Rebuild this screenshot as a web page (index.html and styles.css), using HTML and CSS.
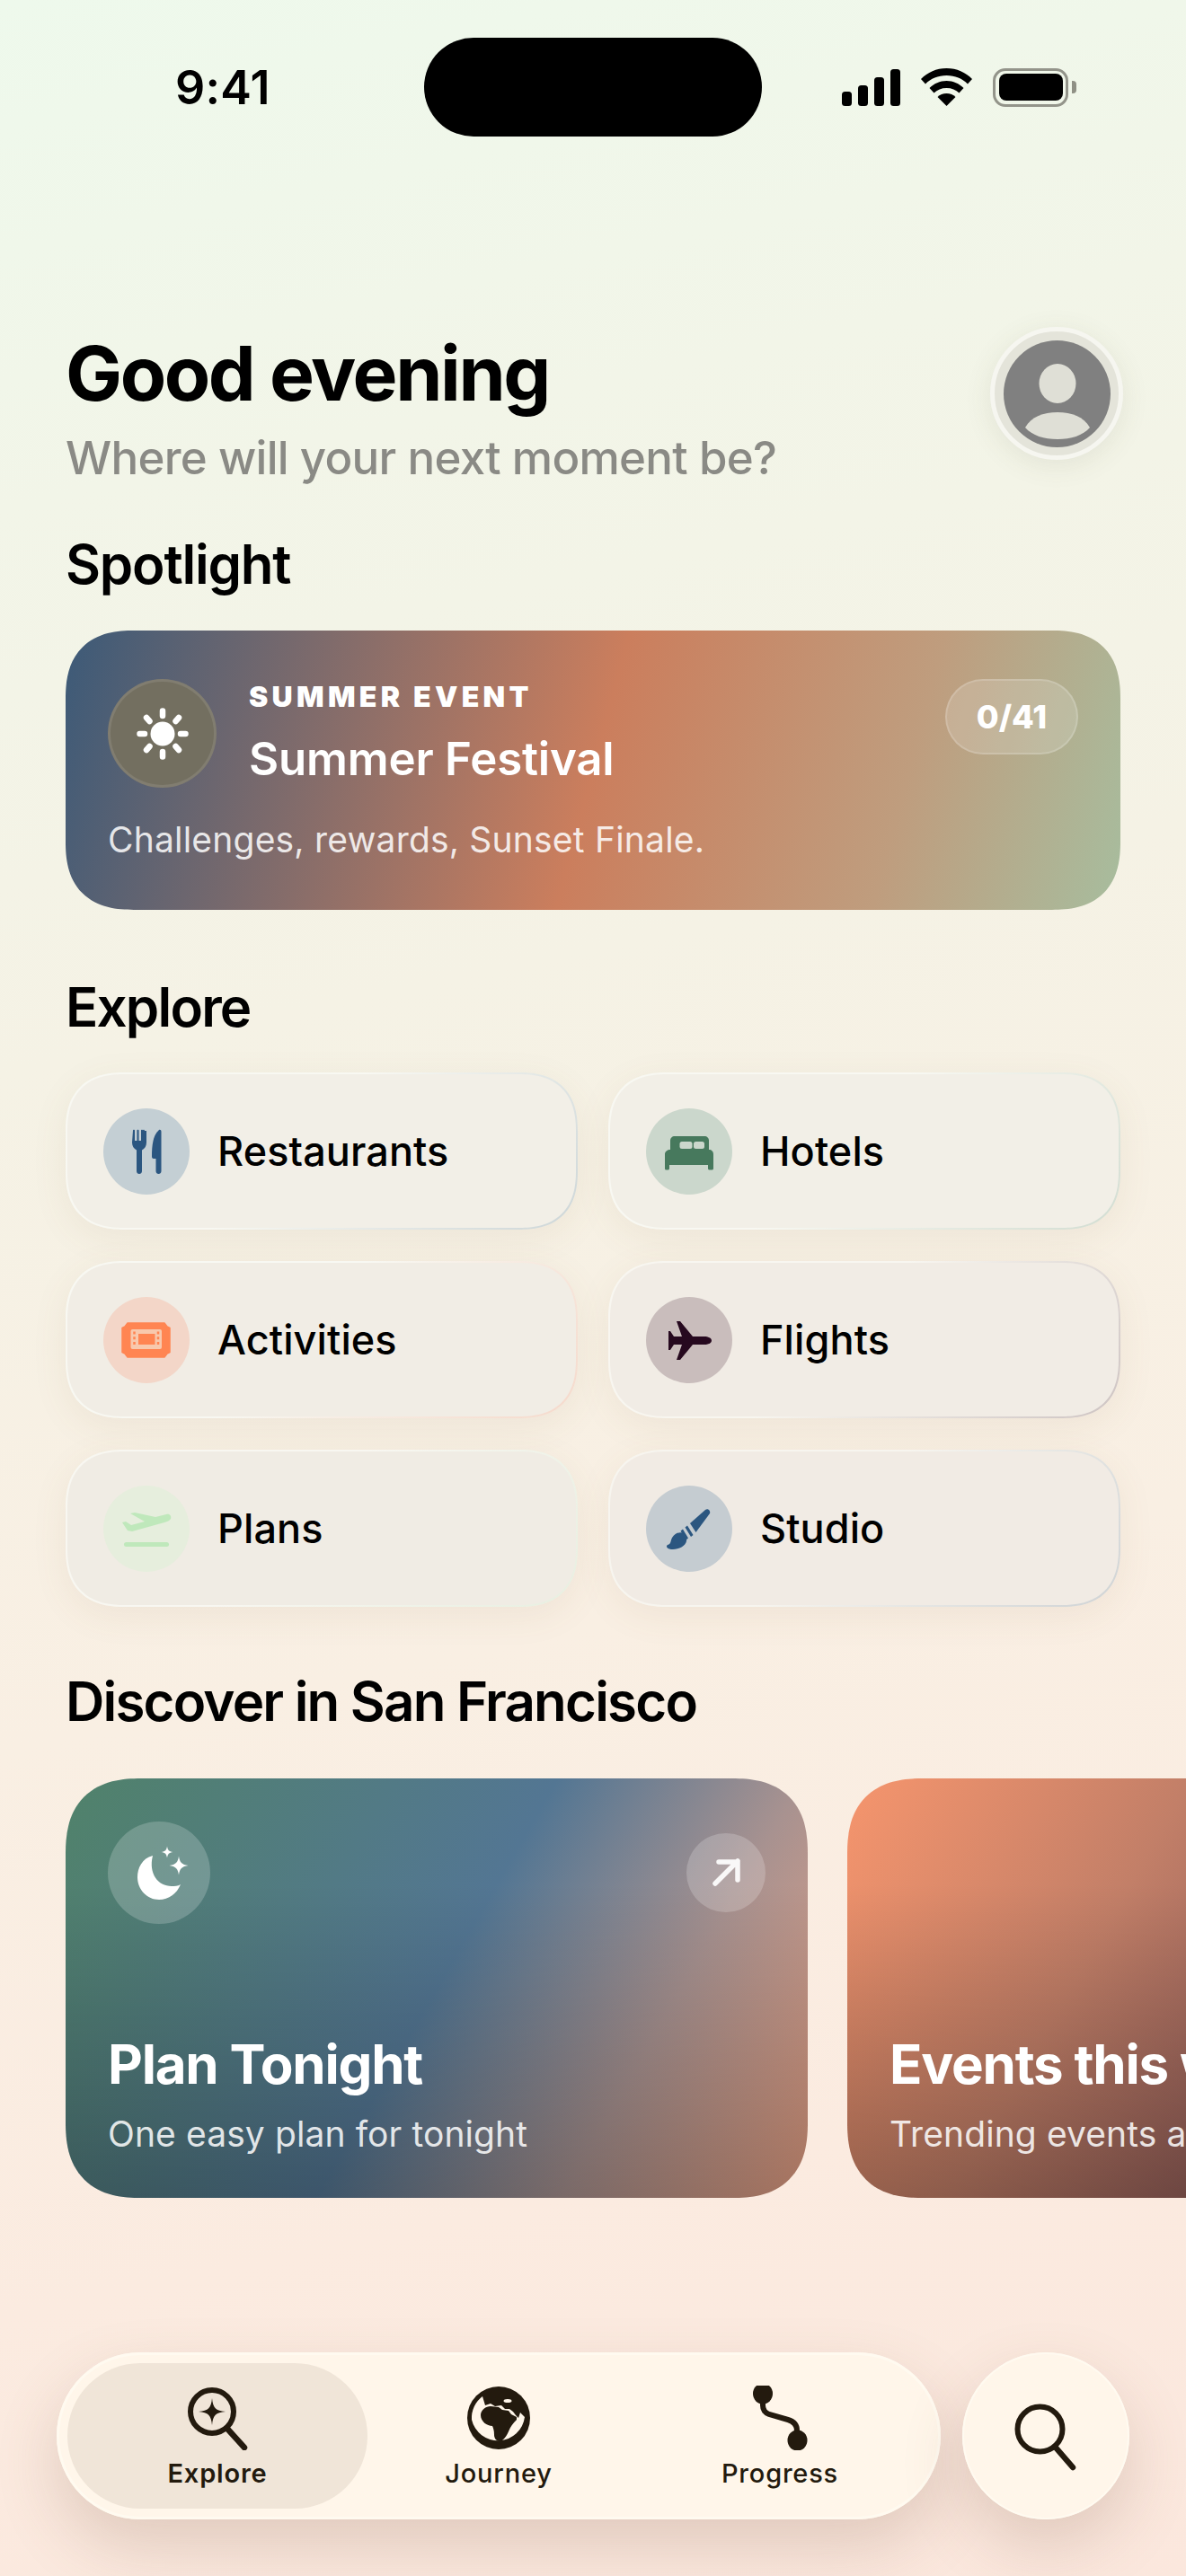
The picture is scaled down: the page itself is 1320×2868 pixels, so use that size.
FILE: index.html
```html
<!DOCTYPE html>
<html>
<head>
    <meta charset="utf-8" />
    <title>Explore</title>
    <link rel="stylesheet" href="styles.css">
</head>
<body>
    <div class="page">
        <div class="status-bar">
            <div class="status-time">9:41</div>
            <div class="island"></div>
            <div class="status-icons">
                <svg width="65" height="41" viewBox="0 0 65 41"><rect x="0" y="25" width="11" height="16" rx="3.5"/><rect x="18" y="18" width="11" height="23" rx="3.5"/><rect x="36" y="9" width="11" height="32" rx="3.5"/><rect x="54" y="0" width="11" height="41" rx="3.5"/></svg>
                <svg class="wifi" width="57" height="42" viewBox="0 0 57 42"><path d="M28.5 0C17 0 7.500 4.500 0 12l5 5.500C11 11.500 19 8 28.500 8S46 11.500 52 17.500l5-5.500C49.500 4.500 40 0 28.500 0z"/><path d="M28.500 14c-7.500 0-14 3-19 8l5 5.500c3.500-3.500 8.500-5.500 14-5.500s10.500 2 14 5.500l5-5.500c-5-5-11.500-8-19-8z"/><path d="M28.500 28c-4 0-7.500 1.500-10 4l10 10 10-10c-2.500-2.500-6-4-10-4z"/></svg>
                <div class="battery">
                    <div class="battery-body"><div class="battery-level"></div></div>
                    <div class="battery-nub"></div>
                </div>
            </div>
        </div>

        <header class="header">
            <div class="greeting">
                <h1>Good evening</h1>
                <p>Where will your next moment be?</p>
            </div>
            <div class="avatar">
                <svg width="119" height="119" viewBox="0 0 119 119"><circle cx="59.500" cy="59.500" r="59.500" fill="#808080"/><ellipse cx="60" cy="48" rx="20.500" ry="22" fill="#dfdfd6"/><path d="M24 97C31 85 44 80 60 80s29 5 36 17c-8 9-21 13-36 13s-28-4-36-13z" fill="#dfdfd6"/></svg>
            </div>
        </header>

        <h2 class="section-title spotlight-title">Spotlight</h2>
        <section class="spotlight">
            <div class="spotlight-row">
                <div class="spotlight-icon">
                    <svg width="70" height="70" viewBox="0 0 70 70" fill="#fff" stroke="#fff" stroke-width="6.500" stroke-linecap="round"><circle cx="35" cy="35" r="13.500" stroke="none"/><path d="M35 9.500v5.500M35 55v5.500M9.500 35h5.500M55 35h5.500M17 17l3.500 4M53 17l-3.500 4M17 53l3.500-4M53 53l-3.500-4"/></svg>
                </div>
                <div class="spotlight-text">
                    <div class="eyebrow">SUMMER EVENT</div>
                    <div class="spotlight-name">Summer Festival</div>
                </div>
                <div class="badge">0/41</div>
            </div>
            <p class="spotlight-desc">Challenges, rewards, Sunset Finale.</p>
        </section>

        <h2 class="section-title explore-title">Explore</h2>
        <div class="tiles">
            <div class="tile tile-blue">
                <div class="tile-icon icon-blue">
                    <svg width="96" height="96" viewBox="0 0 96 96" fill="#2b5680"><path d="M33 24.500c0-1 2-1 2 0V36h2.500V24.500c0-1 2-1 2 0V36H42V24.500c0-1 2-1 2 0V24.500c0-1 2-1 2 .5 0 0 2 0 2 0V38c0 4-2 7-5 8.500V70c0 4-6 4-6 0V46.500c-3-1.500-5-4.500-5-8.500z"/><path d="M62 24c1.500-.5 2.500.5 2.500 2v44c0 4-6 4-6 0V56h-2.500c-1.500 0-2-1-2-2.500C54 42 55 30 62 24z"/></svg>
                </div>
                <span>Restaurants</span>
            </div>
            <div class="tile tile-green">
                <div class="tile-icon icon-green">
                    <svg width="96" height="96" viewBox="0 0 96 96" fill="#47795d"><path d="M32 31h33c3 0 5 2 5 5v10H27V36c0-3 2-5 5-5z"/><rect x="37.500" y="37" width="14" height="8" rx="2.500" fill="#cbd7cc"/><rect x="53" y="37" width="12" height="8" rx="2.500" fill="#cbd7cc"/><path d="M27 46h43c3 0 5 2 5 5v16c0 1-1 1.500-2 1.500h-2c-1 0-2-.5-2-1.500v-4H26v4c0 1-1 1.500-2 1.500h-1c-1.500 0-2-.5-2-1.500V51c0-3 3-5 6-5z"/></svg>
                </div>
                <span>Hotels</span>
            </div>
            <div class="tile tile-orange">
                <div class="tile-icon icon-orange">
                    <svg width="96" height="96" viewBox="0 0 96 96" fill="#ff8552"><path d="M27 29h41l3 4 3 1.500v27L71 63l-3 4H27l-3-4-3-1.500v-27L24 33z" stroke="#ff8552" stroke-width="1.500" stroke-linejoin="round"/><rect x="30.500" y="36" width="34.500" height="22" rx="2" fill="#f8c9ad"/><rect x="39" y="41" width="18.500" height="12" fill="#ff8552"/><path d="M34.500 38.500v17M61 38.500v17" stroke="#ff8552" stroke-width="2.500" stroke-dasharray="3 2.800"/></svg>
                </div>
                <span>Activities</span>
            </div>
            <div class="tile tile-plum">
                <div class="tile-icon icon-plum">
                    <svg width="96" height="96" viewBox="0 0 96 96" fill="#26091f"><path d="M73 48.500c0-3-4-4.500-8-4.500H52L38 27h-4l6 17h-9l-4-6h-2v21h2l4-6h9l-6 17h4l14-17h13c4 0 8-1.500 8-4.500z"/></svg>
                </div>
                <span>Flights</span>
            </div>
            <div class="tile tile-mint">
                <div class="tile-icon icon-mint">
                    <svg width="96" height="96" viewBox="0 0 96 96" fill="#bfe8bb"><path d="M21 41l4-1 6 4 15-4-16-9 5-1 23 5 12-3c4-1 6 2 5 5-1 2-4 3-7 4L32 51l-5-1z"/><rect x="23" y="63" width="50" height="5" rx="2.500"/></svg>
                </div>
                <span>Plans</span>
            </div>
            <div class="tile tile-slate">
                <div class="tile-icon icon-slate">
                    <svg width="96" height="96" viewBox="0 0 96 96" fill="#2b5680"><path d="M66 27c3-2 6 1 5 4L55.500 52 49 42z"/><path d="M46 44.500l6.500 10.500-2.500 2-6.500-10.500zM41 48.500l6 10-2 1.500-6.500-9.500z"/><path d="M37 52.500c5-1 9 3 8 9-1 7-12 11-19 9-3-1-4-3-2-4.500 4-1 3-4 5-8 2-3.500 5-5.500 8-5.500z"/></svg>
                </div>
                <span>Studio</span>
            </div>
        </div>

        <h2 class="section-title discover-title">Discover in San Francisco</h2>
        <div class="discover-row">
            <div class="discover-card card-tonight">
                <div class="card-top">
                    <div class="moon-icon">
                        <svg width="114" height="114" viewBox="0 0 114 114" fill="#fff"><path d="M50 38C38 41 33 52 33 62c0 14 11 25 24 25 11 0 20-7 24-17-3 2-7 2-10 2-15 0-26-14-21-34z"/><path d="M79 38.500c1 7 3.500 9.500 10.500 10.500-7 1-9.500 3.500-10.500 10.500-1-7-3.500-9.500-10.500-10.500 7-1 9.500-3.500 10.500-10.500z"/><path d="M66 27.500c.7 4.500 2 5.800 6.500 6.500-4.500.7-5.800 2-6.500 6.500-.7-4.500-2-5.800-6.500-6.500 4.500-.7 5.800-2 6.500-6.500z"/></svg>
                    </div>
                    <div class="arrow-icon">
                        <svg width="88" height="88" viewBox="0 0 88 88" fill="none" stroke="#fff" stroke-opacity=".92" stroke-width="5.500" stroke-linecap="round" stroke-linejoin="round"><path d="M32 56l25-25M36 32h21v20"/></svg>
                    </div>
                </div>
                <div class="card-title">Plan Tonight</div>
                <div class="card-sub">One easy plan for tonight</div>
            </div>
            <div class="discover-card card-events">
                <div class="card-top"></div>
                <div class="card-title">Events this week</div>
                <div class="card-sub">Trending events around you</div>
            </div>
        </div>

        <div class="bottom-bar">
            <nav class="tabs">
                <div class="tab tab-active">
                    <svg width="72" height="72" viewBox="0 0 72 72" fill="none" stroke="#231a0e" stroke-width="6" stroke-linecap="round"><circle cx="30" cy="29" r="24"/><path d="M47 48l19 21" stroke-width="6.500"/><path d="M30 14c1 11 4 14 15 15-11 1-14 4-15 15-1-11-4-14-15-15 11-1 14-4 15-15z" fill="#231a0e" stroke="none"/></svg>
                    <span>Explore</span>
                </div>
                <div class="tab">
                    <svg width="72" height="72" viewBox="-36 -36 72 72"><circle r="35" fill="#231a0e"/><path d="M-30 2A30 30 0 0 1-18-24L-15-14-9-16-4-13 3-14 7-10 12-10 16-7 19-3 22 0 24-6 29-1A30 30 0 0 1-30 2Z" fill="#fff6ea"/><path d="M-20-3C-20-9-14-13-9-13L0-12 4-9 11-8 14-4 20-1 20 2C16 6 13 10 11.500 14 9 20 5 26 1 26-3 26-5 22-5 19-5 14-6 11-7 9-13 9-20 4-20-3Z" fill="#231a0e"/><ellipse cx="10" cy="-19" rx="4.500" ry="2" fill="#fff6ea"/></svg>
                    <span>Journey</span>
                </div>
                <div class="tab">
                    <svg width="72" height="72" viewBox="0 0 72 72" fill="#231a0e"><ellipse cx="17" cy="9" rx="11" ry="11.500"/><ellipse cx="55.500" cy="61" rx="11" ry="11.500"/><path d="M17 15v7c0 5 2 8 7 10l21 6c7 2 10 6 10 12v5" fill="none" stroke="#231a0e" stroke-width="6"/></svg>
                    <span>Progress</span>
                </div>
            </nav>
            <div class="search-button">
                <svg width="80" height="84" viewBox="0 0 80 84" fill="none" stroke="#231a0e" stroke-width="6" stroke-linecap="round"><circle cx="28.500" cy="28.500" r="25"/><path d="M46 49l19 22" stroke-width="6.500"/></svg>
            </div>
        </div>
    </div>
</body>
</html>
```

FILE: styles.css
```css
html, body {
    margin: 0;
    font-family: Inter, "Liberation Sans", sans-serif;
    color: #000;
}

h1, h2, p {
    margin: 0;
}

.page {
    width: 1320px;
    height: 2868px;
    overflow: hidden;
    display: flex;
    flex-direction: column;
    box-sizing: border-box;
    padding: 42px 73px 63px;
    background: linear-gradient(168deg, #eef9ec 0%, #f2f5e8 18%, #f5f2e5 38%, #f9efe3 62%, #fbebe0 82%, #fbe7dd 100%);
}

/* status bar */
.status-bar {
    display: flex;
    align-items: center;
    height: 110px;
}

.status-time {
    width: 399px;
    padding-left: 122px;
    box-sizing: border-box;
    font-size: 52px;
    font-weight: 600;
    letter-spacing: .2px;
}

.island {
    width: 376px;
    height: 110px;
    border-radius: 55px;
    background: #000;
}

.status-icons {
    display: flex;
    align-items: center;
    margin-left: 89px;
}

.status-icons svg {
    display: block;
}

.wifi {
    margin-left: 23px;
}

.battery {
    display: flex;
    align-items: center;
    margin-left: 23px;
}

.battery-body {
    width: 84px;
    height: 43px;
    box-sizing: border-box;
    border: 3.5px solid #93948a;
    border-radius: 14px;
    padding: 3.5px;
}

.battery-level {
    height: 100%;
    background: #000;
    border-radius: 8px;
}

.battery-nub {
    width: 5px;
    height: 14px;
    margin-left: 4px;
    background: #8f9085;
    border-radius: 0 4px 4px 0;
}

/* header */
.header {
    display: flex;
    justify-content: space-between;
    margin-top: 212px;
}

.greeting {
    padding-top: 2px;
}

.greeting h1 {
    font-size: 84px;
    line-height: 100px;
    font-weight: 700;
    letter-spacing: -2.4px;
}

.greeting p {
    margin-top: 14px;
    font-size: 51px;
    line-height: 60px;
    font-weight: 500;
    color: #8a8a85;
    letter-spacing: -.7px;
}

.avatar {
    width: 148px;
    height: 148px;
    margin-right: -3px;
    box-sizing: border-box;
    border: 5px solid #f6f6f0;
    border-radius: 50%;
    background: #e4e4da;
    display: flex;
    align-items: center;
    justify-content: center;
    box-shadow: 0 6px 30px rgba(90, 90, 60, .1);
}

.avatar svg {
    display: block;
}

.section-title {
    font-size: 60px;
    line-height: 72px;
    font-weight: 600;
    letter-spacing: -1.8px;
}

.spotlight-title {
    margin-top: 52px;
    letter-spacing: -1.2px;
}

.explore-title {
    margin-top: 72px;
}

.discover-title {
    margin-top: 69px;
}

/* spotlight card */
.spotlight {
    margin-top: 38px;
    height: 311px;
    box-sizing: border-box;
    padding: 54px 47px 0;
    border-radius: 76px;
    corner-shape: superellipse(1.3);
    color: #fff;
    background: linear-gradient(105deg, #3c5a78 0%, #cb7e5d 50%, #bf9d7e 78%, #a7bd9e 100%);
}

.spotlight-row {
    display: flex;
    align-items: flex-start;
}

.spotlight-icon {
    width: 121px;
    height: 121px;
    flex: none;
    box-sizing: border-box;
    border: 3px solid rgba(255, 255, 255, .1);
    border-radius: 50%;
    background: #736f60;
    display: flex;
    align-items: center;
    justify-content: center;
}

.spotlight-text {
    margin-left: 36px;
}

.eyebrow {
    font-size: 32px;
    line-height: 40px;
    font-weight: 900;
    letter-spacing: 4.300px;
}

.spotlight-name {
    margin-top: 19px;
    font-size: 51px;
    line-height: 60px;
    font-weight: 600;
    letter-spacing: -.2px;
}

.badge {
    margin-left: auto;
    width: 148px;
    height: 84px;
    box-sizing: border-box;
    border: 2px solid rgba(255, 255, 255, .16);
    border-radius: 42px;
    background: rgba(255, 255, 255, .16);
    display: flex;
    align-items: center;
    justify-content: center;
    font-size: 36px;
    font-weight: 800;
}

.spotlight-desc {
    margin-top: 34px;
    font-size: 39px;
    line-height: 48px;
    color: rgba(255, 255, 255, .85);
    letter-spacing: .2px;
}

/* explore tiles */
.tiles {
    margin-top: 37px;
    display: grid;
    grid-template-columns: 570px 570px;
    grid-auto-rows: 175px;
    gap: 35px 34px;
}

.tile {
    display: flex;
    align-items: center;
    gap: 31px;
    box-sizing: border-box;
    padding-left: 40px;
    border: 2px solid transparent;
    border-radius: 66px;
    corner-shape: superellipse(1.3);
    font-size: 45px;
    font-weight: 500;
    letter-spacing: .1px;
    box-shadow: 0 10px 40px rgba(130, 100, 70, .08);
}

.tile-blue {
    background: linear-gradient(#f2efe7, #f2efe7) padding-box, linear-gradient(135deg, #f8f8f2 45%, #cdd6d8) border-box;
}

.tile-green {
    background: linear-gradient(#f2efe7, #f2efe7) padding-box, linear-gradient(135deg, #f8f8f2 45%, #d2ddd2) border-box;
}

.tile-orange {
    background: linear-gradient(#f1ede5, #f1ede5) padding-box, linear-gradient(135deg, #f8f8f2 45%, #f5d9cb) border-box;
}

.tile-plum {
    background: linear-gradient(#f1ece5, #f1ece5) padding-box, linear-gradient(135deg, #f8f6f0 45%, #cdc3c2) border-box;
}

.tile-mint {
    background: linear-gradient(#f0ece4, #f0ece4) padding-box, linear-gradient(135deg, #f8f7f1 45%, #e8efe1) border-box;
}

.tile-slate {
    background: linear-gradient(#f1ebe4, #f1ebe4) padding-box, linear-gradient(135deg, #f7f5ef 45%, #cfd3d5) border-box;
}

.tile-icon {
    width: 96px;
    height: 96px;
    flex: none;
    border-radius: 50%;
}

.tile-icon svg {
    display: block;
}

.icon-blue {
    background: #c4cfd4;
}

.icon-green {
    background: #cbd7cc;
}

.icon-orange {
    background: #f3d6c8;
}

.icon-plum {
    background: #c9bdbc;
}

.icon-mint {
    background: #e6eedd;
}

.icon-slate {
    background: #c5ccd1;
}

/* discover cards */
.discover-row {
    margin-top: 50px;
    display: flex;
    gap: 44px;
}

.discover-card {
    width: 826px;
    height: 467px;
    flex: none;
    box-sizing: border-box;
    padding: 48px 47px 47px;
    border-radius: 84px;
    corner-shape: superellipse(1.3);
    color: #fff;
    display: flex;
    flex-direction: column;
}

.card-tonight {
    background: linear-gradient(to bottom, rgba(0, 0, 0, 0) 25%, rgba(0, 0, 0, .28) 100%), linear-gradient(120deg, #50826a 0%, #537693 50%, #a89290 75%, #e8a083 100%);
}

.card-events {
    background: linear-gradient(to bottom, rgba(0, 0, 0, 0) 25%, rgba(0, 0, 0, .28) 100%), linear-gradient(120deg, #f6956d 0%, #c27f68 35%, #95605a 60%, #6e4a48 100%);
}

.card-top {
    flex: 1;
    display: flex;
    align-items: flex-start;
    justify-content: space-between;
}

.moon-icon {
    width: 114px;
    height: 114px;
    border-radius: 50%;
    background: rgba(255, 255, 255, .2);
}

.arrow-icon {
    width: 88px;
    height: 88px;
    margin-top: 13px;
    border-radius: 50%;
    background: rgba(255, 255, 255, .2);
}

.moon-icon svg,
.arrow-icon svg {
    display: block;
}

.card-title {
    font-size: 60px;
    line-height: 72px;
    font-weight: 700;
    letter-spacing: -1.2px;
    white-space: nowrap;
}

.card-sub {
    margin-top: 18px;
    font-size: 39px;
    line-height: 48px;
    color: rgba(255, 255, 255, .85);
    letter-spacing: .1px;
    white-space: nowrap;
}

/* bottom bar */
.bottom-bar {
    margin-top: auto;
    margin-left: -10px;
    display: flex;
    gap: 24px;
}

.tabs {
    width: 984px;
    height: 186px;
    flex: none;
    box-sizing: border-box;
    padding: 12px;
    display: flex;
    border-radius: 93px;
    background: #fff6ea;
    box-shadow: inset 0 0 0 3px #fffaf0, 0 30px 70px rgba(120, 80, 60, .2);
}

.tab {
    width: 334px;
    height: 162px;
    flex: none;
    border-radius: 81px;
    box-sizing: border-box;
    padding-top: 25px;
    display: flex;
    flex-direction: column;
    align-items: center;
    font-size: 29px;
    line-height: 36px;
    font-weight: 500;
    letter-spacing: .8px;
    color: #231a0e;
}

.tab + .tab {
    margin-left: -21px;
}

.tab svg {
    display: block;
    margin-bottom: 8px;
}

.tab-active {
    background: #f0e5d8;
    font-weight: 600;
}

.search-button {
    width: 186px;
    height: 186px;
    flex: none;
    box-sizing: border-box;
    padding: 57px 0 0 58px;
    border-radius: 50%;
    background: #fff6ea;
    box-shadow: inset 0 0 0 2px #fffaf0, 0 30px 70px rgba(120, 80, 60, .2);
}

.search-button svg {
    display: block;
}
```
